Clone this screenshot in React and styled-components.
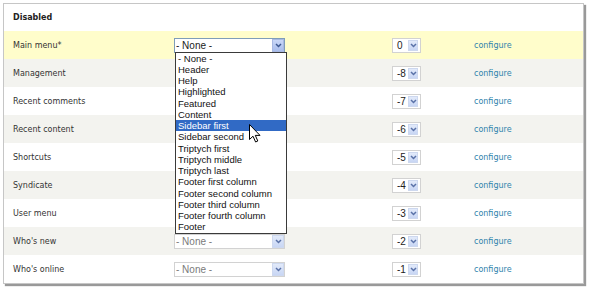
import React from 'react';
import styled, { createGlobalStyle } from 'styled-components';

const Global = createGlobalStyle`
  html, body { margin: 0; padding: 0; background: #fff; }
  body { width: 589px; height: 290px; overflow: hidden; }
`;

const Page = styled.div`
  padding: 3px 0 0 3px;
`;

const Frame = styled.div`
  position: relative;
  width: 581px;
  box-sizing: border-box;
  border: 1px solid #c6c6c6;
  box-shadow: 2px 2px 1px rgba(0, 0, 0, 0.4);
  background: #fff;
  font-family: "DejaVu Sans", Verdana, sans-serif;
  font-size: 8px;
  color: #333;
`;

const HeaderRow = styled.div`
  height: 27px;
  display: flex;
  align-items: center;
  padding-left: 9px;
  font-weight: bold;
  color: #222;
`;

const tones = { yellow: '#fffdcb', grey: '#f3f3ef', white: '#fff' };

const Row = styled.div`
  display: grid;
  grid-template-columns: 170px 218px 82px 1fr;
  align-items: center;
  height: 28px;
  background: ${(p) => tones[p.$tone]};
`;

const Label = styled.div`
  padding-left: 9px;
  color: #333;
`;

const Cell = styled.div`
  position: relative;
`;

const SelectBox = styled.div`
  position: relative;
  box-sizing: border-box;
  width: ${(p) => p.$w}px;
  height: 15px;
  border: 1px solid ${(p) => (p.$active ? '#7f9db9' : '#d2d2d2')};
  background: #fff;
  display: flex;
  align-items: center;
  justify-content: space-between;
  padding-left: ${(p) => p.$pad}px;
  font-family: "Liberation Sans", Arial, sans-serif;
  font-size: 10px;
  color: ${(p) => (p.$muted ? '#7a7a7a' : '#222')};
`;

const ArrowBtn = styled.span`
  box-sizing: border-box;
  width: ${(p) => (p.$small ? 10 : 12)}px;
  height: ${(p) => (p.$small ? 11 : 13)}px;
  margin-right: ${(p) => (p.$small ? 2 : 0)}px;
  display: flex;
  align-items: center;
  justify-content: center;
  background: ${(p) =>
    p.$active ? 'linear-gradient(#c9d7f7, #a9bdec)' : 'linear-gradient(#e2eafa, #c8d6f4)'};
  border: 1px solid ${(p) => (p.$active ? '#a8b9e3' : '#cdd8ef')};
`;

const List = styled.ul`
  position: absolute;
  top: 100%;
  left: 0;
  z-index: 2;
  box-sizing: border-box;
  width: 112px;
  margin: 0;
  padding: 0;
  list-style: none;
  background: #fff;
  border: 1px solid #3a3a3a;
  font-family: "Liberation Sans", Arial, sans-serif;
  font-size: 9.5px;
  color: #111;
`;

const Item = styled.li`
  height: 11.25px;
  line-height: 11.25px;
  padding-left: 2px;
  white-space: nowrap;
  background: ${(p) => (p.$selected ? '#316ac5' : 'transparent')};
  color: ${(p) => (p.$selected ? '#fff' : '#111')};
`;

const Configure = styled.a`
  color: #2f83ad;
  text-decoration: none;
`;

const Cursor = styled.svg`
  position: absolute;
  left: 245px;
  top: 120px;
  z-index: 3;
`;

const Chevron = ({ active }) => (
  <svg width="7" height="5" viewBox="0 0 7 5">
    <path d="M1 1 L3.5 3.5 L6 1" fill="none" stroke={active ? '#3d5890' : '#5a72a8'} strokeWidth="1.5" />
  </svg>
);

const regions = [
  '- None -', 'Header', 'Help', 'Highlighted', 'Featured', 'Content', 'Sidebar first',
  'Sidebar second', 'Triptych first', 'Triptych middle', 'Triptych last',
  'Footer first column', 'Footer second column', 'Footer third column',
  'Footer fourth column', 'Footer',
];

const rows = [
  { name: 'Main menu*', weight: '0', tone: 'yellow', open: true },
  { name: 'Management', weight: '-8', tone: 'grey', covered: true },
  { name: 'Recent comments', weight: '-7', tone: 'white', covered: true },
  { name: 'Recent content', weight: '-6', tone: 'grey', covered: true },
  { name: 'Shortcuts', weight: '-5', tone: 'white', covered: true },
  { name: 'Syndicate', weight: '-4', tone: 'grey', covered: true },
  { name: 'User menu', weight: '-3', tone: 'white', covered: true },
  { name: "Who's new", weight: '-2', tone: 'grey' },
  { name: "Who's online", weight: '-1', tone: 'white' },
];

export default function App() {
  return (
    <>
      <Global />
      <Page>
        <Frame>
          <HeaderRow>Disabled</HeaderRow>
          {rows.map((r) => (
            <Row key={r.name} $tone={r.tone}>
              <Label>{r.name}</Label>
              <Cell>
                {!r.covered && (
                  <SelectBox $w={111} $pad={1} $active={r.open} $muted={!r.open}>
                    <span>- None -</span>
                    <ArrowBtn $active={r.open}>
                      <Chevron active={r.open} />
                    </ArrowBtn>
                    {r.open && (
                      <List>
                        {regions.map((g) => (
                          <Item key={g} $selected={g === 'Sidebar first'}>{g}</Item>
                        ))}
                      </List>
                    )}
                  </SelectBox>
                )}
              </Cell>
              <Cell>
                <SelectBox $w={29} $pad={4}>
                  <span>{r.weight}</span>
                  <ArrowBtn $small>
                    <Chevron />
                  </ArrowBtn>
                </SelectBox>
              </Cell>
              <Cell>
                <Configure href="#">configure</Configure>
              </Cell>
            </Row>
          ))}
          <Cursor width="12" height="19" viewBox="0 0 12 19">
            <path d="M0.5 0.5 L0.5 15.5 L4 12.2 L6.6 18 L8.8 17 L6.3 11.4 L11 11.4 Z" fill="#fff" stroke="#000" strokeWidth="1" strokeLinejoin="round" />
          </Cursor>
        </Frame>
      </Page>
    </>
  );
}
